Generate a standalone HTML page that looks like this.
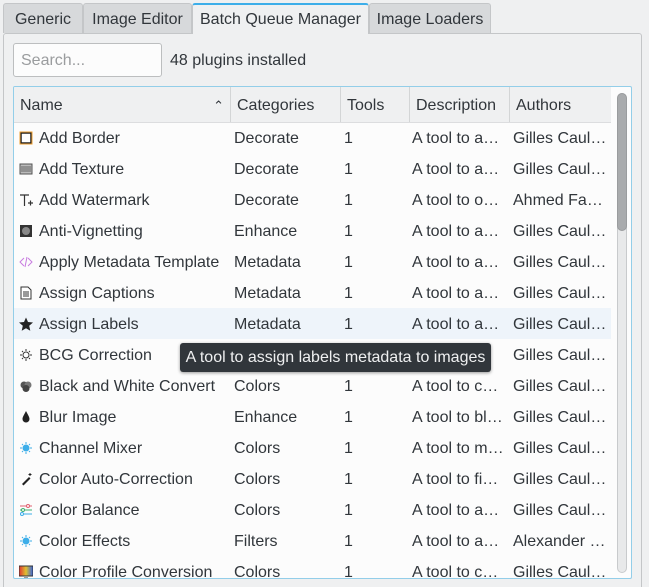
<!DOCTYPE html>
<html style="width:649px;height:587px;overflow:hidden"><head><style>
body{margin:0;width:649px;height:587px;background:#eff0f1;font-family:"Liberation Sans",sans-serif;font-size:16px;color:#31363b;position:relative;overflow:hidden}
.tab{position:absolute;top:3px;height:30px;line-height:31px;background:#d7d9db;border:1px solid #c4c6c8;border-bottom:none;box-sizing:border-box;text-align:center;color:#31363b;border-radius:3px 3px 0 0}
.tab.act{background:#eff0f1;border-top:2px solid #3daee9;height:31px;line-height:29px;z-index:2}
.panel{position:absolute;left:3px;top:33px;width:639px;height:570px;border:1px solid #c4c6c8;border-radius:3px;box-sizing:border-box}
.search{position:absolute;left:13px;top:43px;width:149px;height:34px;background:#fcfcfc;border:1px solid #bcbebf;border-radius:3px;box-sizing:border-box;color:#9a9c9e;padding-left:7px;line-height:34px}
.count{position:absolute;left:170px;top:44px;line-height:34px}
.table{position:absolute;left:13px;top:86px;width:619px;height:493px;border:1px solid #93cee9;border-radius:2px;background:#fcfcfc;box-sizing:border-box;overflow:hidden}
.hdr{position:absolute;left:0;top:0;height:35px;width:597px;background:#eff0f1;border-bottom:1px solid #dcdddf}
.hdr div{position:absolute;top:0;height:35px;line-height:38px;padding-left:6px;box-sizing:border-box;border-right:1px solid #d3d5d6}
.row{position:absolute;left:0;width:597px;height:31px;line-height:33px}
.row span{position:absolute;white-space:nowrap}
.ic{position:absolute;left:5px;top:9px;width:14px;height:14px}
.sb{position:absolute;left:603px;top:6px;width:10px;height:480px;border:1px solid #c8cacc;border-radius:5px;background:#e8e9ea;box-sizing:border-box}
.th{position:absolute;left:603px;top:6px;width:10px;height:138px;border-radius:5px;background:#a9abad;border:1px solid #9a9c9e;box-sizing:border-box}
.tip{position:absolute;left:180px;top:343px;width:311px;height:29px;background:#31363b;color:#eff0f1;border-radius:3px;line-height:30px;text-align:center;box-shadow:0 1px 3px rgba(0,0,0,.4);z-index:5}
</style></head><body>
<div class="panel"></div>
<div class="tab" style="left:3px;width:80px">Generic</div>
<div class="tab" style="left:83px;width:109px">Image Editor</div>
<div class="tab act" style="left:192px;width:177px">Batch Queue Manager</div>
<div class="tab" style="left:369px;width:122px">Image Loaders</div>
<div class="search">Search...</div>
<div class="count">48 plugins installed</div>
<div class="table">
<div class="hdr">
<div style="left:0;width:217px">Name<span style="position:absolute;right:6px;top:0px;font-size:13px">&#8963;</span></div>
<div style="left:217px;width:110px">Categories</div>
<div style="left:327px;width:69px">Tools</div>
<div style="left:396px;width:100px">Description</div>
<div style="left:496px;width:101px;border:none">Authors</div>
</div>
<div id="rows"></div>
<div class="sb"></div><div class="th"></div>
</div>
<div class="tip">A tool to assign labels metadata to images</div>
<script>
var d=[["Add Border","Decorate","A tool to a…","Gilles Caul…",'<rect x="2" y="2" width="10" height="10" fill="#fff" stroke="#222" stroke-width="1.5"/><rect x="1" y="1" width="12" height="12" fill="none" stroke="#f0a030" stroke-width="1"/>'],
["Add Texture","Decorate","A tool to a…","Gilles Caul…",'<rect x="1" y="2" width="12" height="10" fill="#bbb" stroke="#555"/><path d="M2 5h10M2 7h10M2 9h10" stroke="#666"/>'],
["Add Watermark","Decorate","A tool to o…","Ahmed Fa…",'<path d="M1 2h9M5.5 2v11M9 10h5M11.5 7.5v5" stroke="#333" fill="none" stroke-width="1.2"/>'],
["Anti-Vignetting","Enhance","A tool to a…","Gilles Caul…",'<rect x="1" y="1" width="12" height="12" fill="#333"/><circle cx="7" cy="7" r="4" fill="#888"/>'],
["Apply Metadata Template","Metadata","A tool to a…","Gilles Caul…",'<path d="M5 3L1 7l4 4M9 3l4 4-4 4M8 2L6 12" stroke="#c77be0" fill="none"/>'],
["Assign Captions","Metadata","A tool to a…","Gilles Caul…",'<path d="M2 1h7l3 3v9H2z" fill="#fff" stroke="#333"/><path d="M4 6h6M4 8h6M4 10h6" stroke="#333"/>'],
["Assign Labels","Metadata","A tool to a…","Gilles Caul…",'<path d="M7 0.5l2 4.5 5 .5-3.8 3.3 1.1 4.9L7 11.2 2.7 13.7l1.1-4.9L0 5.5l5-.5z" fill="#222"/>'],
["BCG Correction","","","Gilles Caul…",'<circle cx="7" cy="7" r="3" fill="#fff" stroke="#333"/><path d="M7 1v2M7 11v2M1 7h2M11 7h2M3 3l1 1M10 10l1 1M3 11l1-1M10 4l1-1" stroke="#333"/>'],
["Black and White Convert","Colors","A tool to c…","Gilles Caul…",'<circle cx="5" cy="6" r="3.5" fill="#555"/><circle cx="9" cy="6" r="3.5" fill="#777"/><circle cx="7" cy="9.5" r="3.5" fill="#444"/>'],
["Blur Image","Enhance","A tool to bl…","Gilles Caul…",'<path d="M7 1C5 5 3.5 7 3.5 9a3.5 3.5 0 007 0C10.5 7 9 5 7 1z" fill="#222"/>'],
["Channel Mixer","Colors","A tool to m…","Gilles Caul…",'<circle cx="7" cy="7" r="3.5" fill="#3daee9"/><path d="M7 1v2M7 11v2M1 7h2M11 7h2M3 3l1 1M10 10l1 1M3 11l1-1M10 4l1-1" stroke="#3daee9"/>'],
["Color Auto-Correction","Colors","A tool to fi…","Gilles Caul…",'<path d="M3 12l7-7 1.5 1.5-7 7z" fill="#222"/><path d="M11 1v3M9.5 2.5h3" stroke="#222"/>'],
["Color Balance","Colors","A tool to a…","Gilles Caul…",'<path d="M1 3h12" stroke="#e06070"/><path d="M1 7h12" stroke="#40b070"/><path d="M1 11h12" stroke="#3daee9"/><circle cx="9" cy="3" r="1.5" fill="#fff" stroke="#e06070"/><circle cx="4" cy="7" r="1.5" fill="#fff" stroke="#40b070"/><circle cx="3" cy="11" r="1.5" fill="#fff" stroke="#3daee9"/>'],
["Color Effects","Filters","A tool to a…","Alexander …",'<circle cx="7" cy="7" r="3.5" fill="#3daee9"/><path d="M7 1v2M7 11v2M1 7h2M11 7h2M3 3l1 1M10 10l1 1M3 11l1-1M10 4l1-1" stroke="#3daee9"/>'],
["Color Profile Conversion","Colors","A tool to c…","Gilles Caul…",'<defs><linearGradient id="g"><stop offset="0" stop-color="#e03030"/><stop offset=".5" stop-color="#e0c030"/><stop offset="1" stop-color="#3060e0"/></linearGradient></defs><rect x="0" y="1" width="14" height="10" fill="url(#g)" stroke="#333"/><rect x="5" y="11" width="4" height="2" fill="#999"/>']];
var h="";d.forEach(function(r,i){var t=35+i*31;
h+='<div class="row" style="top:'+t+'px;'+(i==6?'background:#eef4fa':'')+'"><svg class="ic" viewBox="0 0 14 14">'+r[4]+'</svg><span style="left:25px">'+r[0]+'</span><span style="left:220px">'+r[1]+'</span><span style="left:330px">'+(r[1]?'1':'')+'</span><span style="left:398px">'+r[2]+'</span><span style="left:499px">'+r[3]+'</span></div>';});
document.getElementById("rows").innerHTML=h;
</script>
</body></html>
